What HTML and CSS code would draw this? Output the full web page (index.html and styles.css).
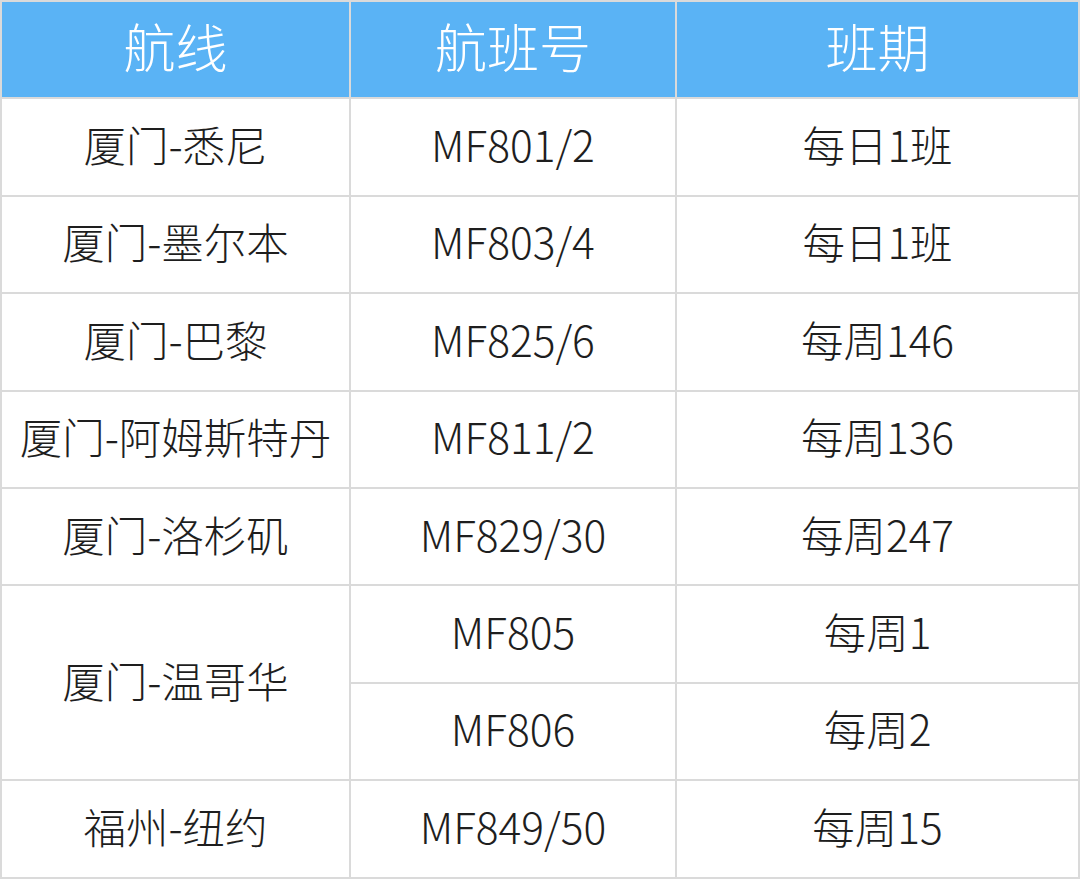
FILE: index.html
```html
<!DOCTYPE html>
<html lang="zh-CN">
<head>
<meta charset="utf-8">
<title>航线</title>
<link rel="stylesheet" href="styles.css">
</head>
<body>
<table class="routes">
  <colgroup>
    <col class="c1">
    <col class="c2">
    <col class="c3">
  </colgroup>
  <thead>
    <tr><th>航线</th><th>航班号</th><th>班期</th></tr>
  </thead>
  <tbody>
    <tr><td>厦门-悉尼</td><td>MF801/2</td><td>每日1班</td></tr>
    <tr><td>厦门-墨尔本</td><td>MF803/4</td><td>每日1班</td></tr>
    <tr><td>厦门-巴黎</td><td>MF825/6</td><td>每周146</td></tr>
    <tr><td>厦门-阿姆斯特丹</td><td>MF811/2</td><td>每周136</td></tr>
    <tr><td>厦门-洛杉矶</td><td>MF829/30</td><td>每周247</td></tr>
    <tr><td rowspan="2">厦门-温哥华</td><td>MF805</td><td>每周1</td></tr>
    <tr><td>MF806</td><td>每周2</td></tr>
    <tr><td>福州-纽约</td><td>MF849/50</td><td>每周15</td></tr>
  </tbody>
</table>
</body>
</html>
```
FILE: styles.css
```css
html, body {
  margin: 0;
  padding: 0;
  background: #ffffff;
}

.routes {
  border-collapse: collapse;
  table-layout: fixed;
  width: 1078px;
  font-family: "Noto Sans CJK SC", "Open Sans", sans-serif;
  color: #1e1e1e;
}

.c1 { width: 349px; }
.c2 { width: 326px; }
.c3 { width: 403px; }

.routes th,
.routes td {
  border: 2px solid #dadada;
  text-align: center;
  vertical-align: middle;
  padding: 0 0 7px;
  line-height: 1.2;
}

.routes tr {
  height: 97.4px;
}

.routes th {
  background: #5ab3f5;
  color: #ffffff;
  font-size: 52px;
  font-weight: 300;
}

.routes td {
  font-size: 42.5px;
  font-weight: 300;
}
```
